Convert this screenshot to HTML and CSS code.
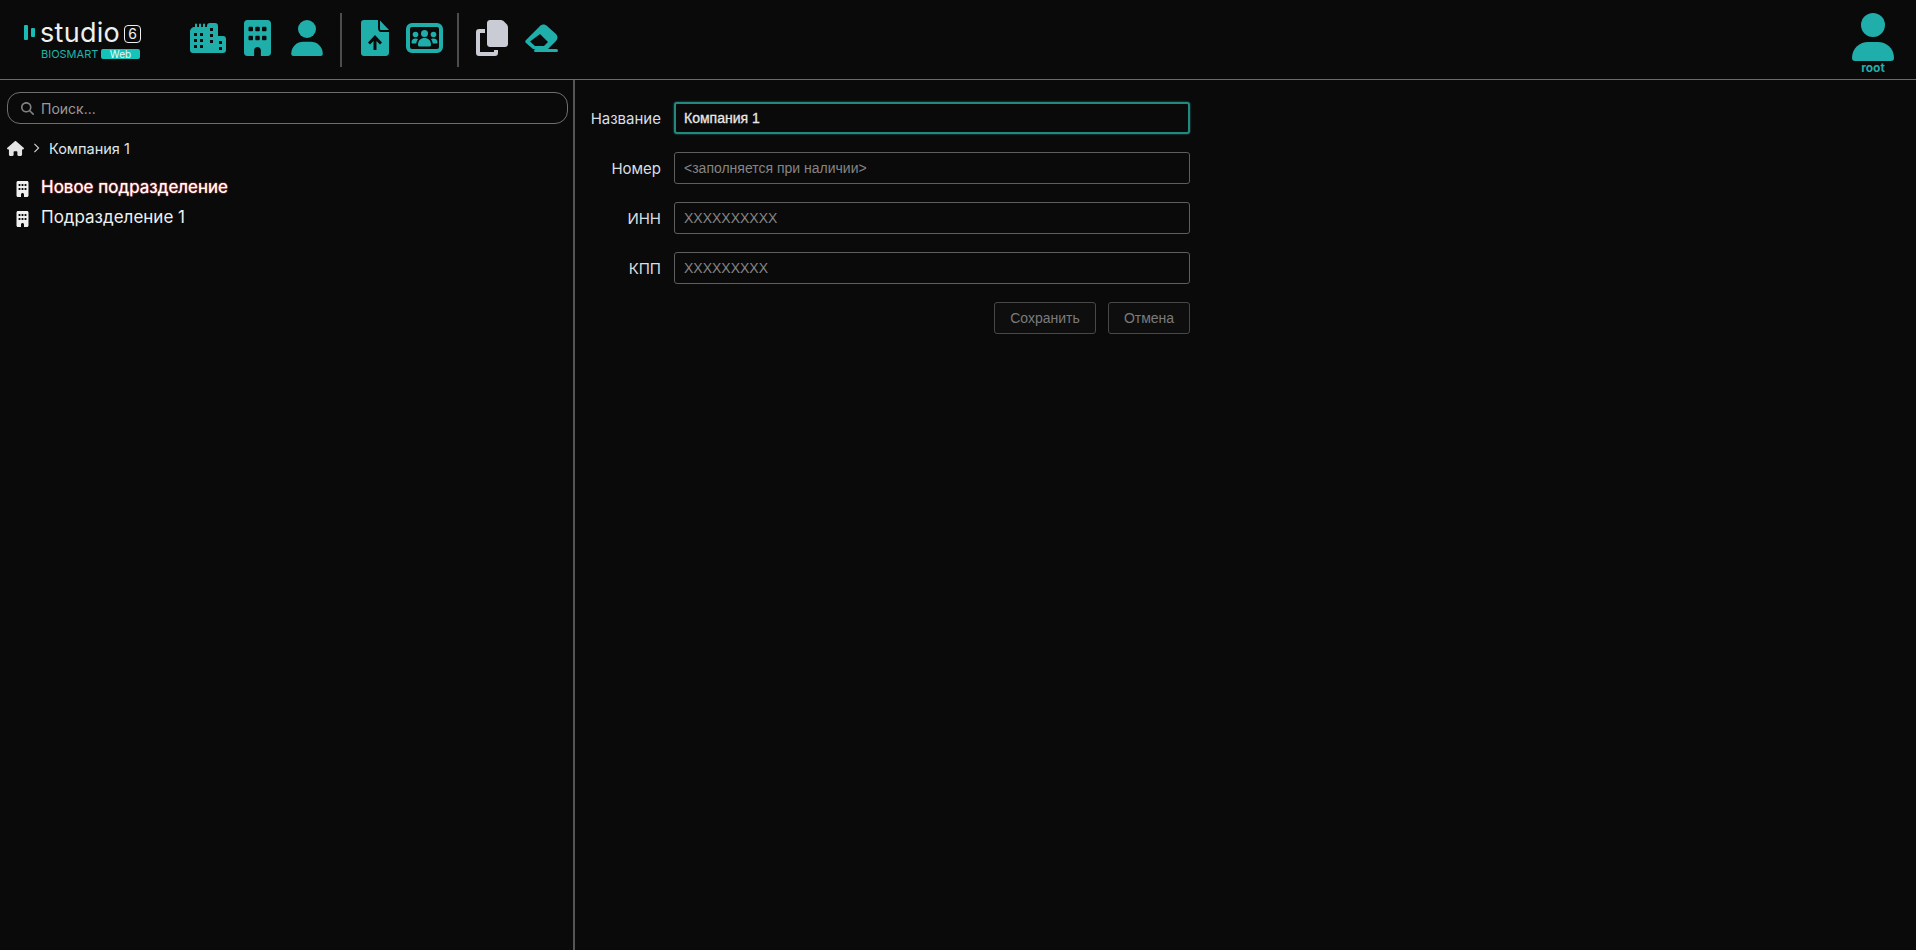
FILE: index.html
```html
<!DOCTYPE html>
<html lang="ru">
<head>
    <meta charset="UTF-8">
    <meta name="viewport" content="width=device-width, initial-scale=1.0">
    <title>Studio 6</title>
    <link rel="stylesheet" href="styles.css">
</head>
<body>
    <svg class="sprite" aria-hidden="true">
        <symbol id="building" viewBox="0 0 384 512">
            <path d="M48 0C21.5 0 0 21.5 0 48V464c0 26.5 21.5 48 48 48h96V432c0-26.5 21.5-48 48-48s48 21.5 48 48v80h96c26.5 0 48-21.5 48-48V48c0-26.5-21.5-48-48-48H48zM64 240c0-8.8 7.2-16 16-16h32c8.8 0 16 7.2 16 16v32c0 8.8-7.2 16-16 16H80c-8.8 0-16-7.2-16-16V240zm112-16h32c8.8 0 16 7.2 16 16v32c0 8.8-7.2 16-16 16H176c-8.8 0-16-7.2-16-16V240c0-8.8 7.2-16 16-16zm80 16c0-8.8 7.2-16 16-16h32c8.8 0 16 7.2 16 16v32c0 8.8-7.2 16-16 16H272c-8.8 0-16-7.2-16-16V240zM80 96h32c8.8 0 16 7.2 16 16v32c0 8.8-7.2 16-16 16H80c-8.8 0-16-7.2-16-16V112c0-8.8 7.2-16 16-16zm80 16c0-8.8 7.2-16 16-16h32c8.8 0 16 7.2 16 16v32c0 8.8-7.2 16-16 16H176c-8.8 0-16-7.2-16-16V112zM272 96h32c8.8 0 16 7.2 16 16v32c0 8.8-7.2 16-16 16H272c-8.8 0-16-7.2-16-16V112c0-8.8 7.2-16 16-16z"/>
        </symbol>
        <symbol id="user" viewBox="0 0 42 48">
            <circle cx="21" cy="12" r="12"/>
            <path d="M0 45C0 35 8 29 16 29H26C34 29 42 35 42 45C42 47 41 48 39 48H3C1 48 0 47 0 45Z"/>
        </symbol>
    </svg>

    <header class="topbar">
        <div class="logo">
            <div class="logo-top">
                <span class="logo-mark"><i></i><i></i></span>
                <span class="logo-name">studio</span>
                <span class="logo-six">6</span>
            </div>
            <div class="logo-bottom">
                <span class="logo-sub">BIOSMART</span>
                <span class="logo-web">Web</span>
            </div>
        </div>

        <div class="tools">
            <svg class="icon city" viewBox="0 0 36 30">
                <path fill-rule="evenodd" d="M5 4V1.500a1 1 0 0 1 2 0V4H9V1.500a1 1 0 0 1 2 0V4H13V1.500a1 1 0 0 1 2 0V4H17V3C17 1 18 0 20 0H25C27 0 28 1 28 3V13H33C35 13 36 14 36 16V27C36 29 35 30 33 30H3C1 30 0 29 0 27V9C0 6 2 4 5 4ZM4 10V13H7V10ZM10 10V13H13V10ZM4 16V19H7V16ZM10 16V19H13V16ZM4 22V25H7V22ZM10 22V25H13V22ZM20 5V8H23V5ZM20 11V14H23V11ZM20 17V20H23V17ZM29 18V21H32V18ZM29 24V27H32V24Z"/>
            </svg>
            <svg class="icon building"><use href="#building"/></svg>
            <svg class="icon person"><use href="#user"/></svg>
            <span class="divider"></span>
            <svg class="icon file" viewBox="0 0 28 36">
                <path d="M3 0H17V8C17 10 18 12 20 12H28V33C28 35 26 36 25 36H3C1 36 0 35 0 33V3C0 1 1 0 3 0Z"/>
                <path d="M19 0.500L28 10H20C19.500 10 19 9.500 19 9Z"/>
                <path class="cut" d="M14 15L21 22.500L19 24.500L15.500 21V30H12.500V21L9 24.500L7 22.500Z"/>
            </svg>
            <svg class="icon group" viewBox="0 0 37 30">
                <rect x="2" y="2" width="33" height="26" rx="4" class="ring"/>
                <circle cx="18.500" cy="10.500" r="3.500"/>
                <circle cx="9.500" cy="11.500" r="2.800"/>
                <circle cx="27.500" cy="11.500" r="2.800"/>
                <path d="M12 22C12 17 15 15 18.500 15S25 17 25 22C25 23 24 23.500 23.500 23.500H13.500C13 23.500 12 23 12 22Z"/>
                <path d="M5.500 19.500C5.500 17 7 15.500 9.500 15.500C10.500 15.500 11.500 15.700 12 16.300C11 17.500 10.500 19 10.300 20.500H6.500C6 20.500 5.500 20 5.500 19.500Z"/>
                <path d="M31.500 19.500C31.500 17 30 15.500 27.500 15.500C26.500 15.500 25.500 15.700 25 16.300C26 17.500 26.500 19 26.700 20.500H30.500C31 20.500 31.500 20 31.500 19.500Z"/>
            </svg>
            <span class="divider"></span>
            <svg class="icon copy" viewBox="0 0 32 36">
                <path d="M11 3C11 1 12.500 0 14 0H24C26 0 27 .5 28 1.500L30.500 4C31.500 5 32 6 32 8V24C32 26 30.500 27 29 27H14C12.500 27 11 26 11 24Z"/>
                <path d="M9 9H3C1 9 0 10 0 12V33C0 35 1 36 3 36H19C21 36 22 35 22 33V30H18V32H4V13H9Z"/>
            </svg>
            <svg class="icon eraser" viewBox="0 0 33 28">
                <path fill-rule="evenodd" d="M1 16L15 2C17 0 20 0 22 2L31 10C33 12 33 15 31 17L23 25H8L1 19C0 18 0 17 1 16ZM5 17.500L10 22H19L23 18L15 10Z"/>
                <rect x="9" y="25" width="24" height="3" rx="1.500"/>
            </svg>
        </div>

        <div class="account">
            <svg class="account-icon"><use href="#user"/></svg>
            <span class="account-name">root</span>
        </div>
    </header>

    <main class="workspace">
        <aside class="sidebar">
            <label class="search">
                <svg class="search-icon" viewBox="0 0 512 512"><path d="M416 208c0 45.900-14.900 88.300-40 122.700L502.600 457.400c12.500 12.500 12.500 32.800 0 45.300s-32.800 12.500-45.300 0L330.700 376c-34.400 25.200-76.800 40-122.700 40C93.100 416 0 322.900 0 208S93.100 0 208 0S416 93.100 416 208zM208 352a144 144 0 1 0 0-288 144 144 0 1 0 0 288z"/></svg>
                <input type="text" placeholder="Поиск...">
            </label>

            <nav class="crumbs">
                <svg class="home-icon" viewBox="0 0 576 512"><path d="M575.800 255.500c0 18-15 32.100-32 32.100h-32l.7 160.200c0 2.700-.2 5.400-.5 8.100V472c0 22.100-17.900 40-40 40H456c-1.100 0-2.200 0-3.300-.1c-1.400 .1-2.800 .1-4.200 .1H416 392c-22.100 0-40-17.900-40-40V448 384c0-17.700-14.300-32-32-32H256c-17.700 0-32 14.300-32 32v64 24c0 22.100-17.900 40-40 40H160 128.100c-1.500 0-3-.1-4.500-.2c-1.200 .1-2.400 .2-3.600 .2H104c-22.100 0-40-17.900-40-40V360c0-.9 0-1.900 .1-2.800V287.600H32c-18 0-32-14-32-32.100c0-9 3-17 10-24L266.400 8c7-7 15-8 22-8s15 2 21 7L564.800 231.500c8 7 12 15 11 24z"/></svg>
                <svg class="crumb-arrow" viewBox="0 0 8 12"><path d="M1.500 1L6.500 6L1.500 11"/></svg>
                <span>Компания 1</span>
            </nav>

            <ul class="tree">
                <li class="tree-item active">
                    <svg class="tree-icon"><use href="#building"/></svg>
                    <span>Новое подразделение</span>
                </li>
                <li class="tree-item">
                    <svg class="tree-icon"><use href="#building"/></svg>
                    <span>Подразделение 1</span>
                </li>
            </ul>
        </aside>

        <section class="content">
            <form class="company-form">
                <label class="field-label">Название</label>
                <input class="field focused" type="text" value="Компания 1">
                <label class="field-label">Номер</label>
                <input class="field" type="text" placeholder="<заполняется при наличии>">
                <label class="field-label">ИНН</label>
                <input class="field" type="text" placeholder="XXXXXXXXXX">
                <label class="field-label">КПП</label>
                <input class="field" type="text" placeholder="XXXXXXXXX">
                <div class="actions">
                    <button type="button" class="btn save" disabled>Сохранить</button>
                    <button type="button" class="btn cancel" disabled>Отмена</button>
                </div>
            </form>
        </section>
    </main>
</body>
</html>
```

FILE: styles.css
```css
* {
    box-sizing: border-box;
}
html, body {
    height: 100%;
}
body {
    margin: 0;
    display: flex;
    flex-direction: column;
    overflow: hidden;
    background-color: #0a0a0a;
    color: #e6e6e6;
    font-family: Inter, "Noto Sans", sans-serif;
}
.sprite {
    display: none;
}

/* top bar */
.topbar {
    display: flex;
    align-items: center;
    flex: none;
    height: 80px;
    padding: 0 22px 4px 24px;
    border-bottom: 1px solid #6b6b6b;
}
.logo {
    width: 117px;
    flex: none;
    margin-top: 4px;
}
.logo-top {
    display: flex;
    align-items: center;
    height: 26px;
}
.logo-mark {
    display: flex;
    align-items: center;
    gap: 3px;
    margin-right: 5px;
}
.logo-mark i {
    display: block;
    width: 4px;
    height: 15px;
    background-color: #17bdb4;
    border-radius: 1px;
}
.logo-mark i + i {
    height: 9px;
    width: 4px;
}
.logo-name {
    font-size: 27px;
    line-height: 26px;
    letter-spacing: .3px;
    color: #efefef;
}
.logo-six {
    width: 18px;
    height: 18px;
    margin: 2px 0 0 4px;
    border: 1px solid #efefef;
    border-radius: 4px;
    font-size: 14px;
    line-height: 16px;
    text-align: center;
    color: #efefef;
}
.logo-bottom {
    display: flex;
    align-items: center;
    margin-top: 3px;
    padding-left: 17px;
}
.logo-sub {
    width: 60px;
    font-size: 11px;
    line-height: 11px;
    color: #1fb5ad;
}
.logo-web {
    width: 39px;
    height: 10px;
    border-radius: 2px;
    background-color: #14c4ba;
    color: #e4fbf9;
    font-size: 10px;
    line-height: 10px;
    text-align: center;
}
.tools {
    display: flex;
    align-items: center;
    margin-left: 49px;
}
.icon {
    fill: #20aeaa;
    flex: none;
}
.city {
    width: 36px;
    height: 30px;
}
.building {
    width: 27px;
    height: 36px;
    margin-left: 18px;
}
.person {
    width: 34px;
    height: 36px;
    margin-left: 19px;
}
.divider {
    width: 2px;
    height: 54px;
    margin: 4px 19px 0 16px;
    background-color: #4d4d4d;
}
.file {
    width: 28px;
    height: 36px;
}
.file .cut {
    fill: #0a0a0a;
}
.group {
    width: 37px;
    height: 30px;
    margin-left: 17px;
}
.group .ring {
    fill: none;
    stroke: #20aeaa;
    stroke-width: 4;
}
.group + .divider {
    margin-left: 14px;
    margin-right: 17px;
}
.copy {
    width: 32px;
    height: 36px;
    fill: #c9ccd4;
}
.eraser {
    width: 33px;
    height: 28px;
    margin-left: 17px;
}
.account {
    display: flex;
    flex-direction: column;
    align-items: center;
    margin-left: auto;
    padding-top: 11px;
}
.account-icon {
    display: block;
    width: 42px;
    height: 48px;
    fill: #20aeaa;
}
.account-name {
    color: #20aeaa;
    font-size: 12px;
    font-weight: 700;
    line-height: 13px;
}

/* left tree */
.workspace {
    display: flex;
    flex: 1;
    min-height: 0;
}
.sidebar {
    flex: none;
    width: 575px;
    padding: 12px 7px 0;
    border-right: 2px solid #555;
}
.search {
    display: flex;
    align-items: center;
    height: 32px;
    width: 561px;
    padding-left: 13px;
    border: 1px solid #6f6f6f;
    border-radius: 13px;
}
.search-icon {
    width: 13px;
    height: 13px;
    margin-right: 7px;
    fill: #808080;
}
.search input {
    flex: 1;
    padding: 0;
    border: none;
    outline: none;
    background: none;
    color: #e6e6e6;
    font-family: inherit;
    font-size: 14px;
}
.search input::placeholder {
    color: #9a9a9a;
    opacity: 1;
}
.crumbs {
    display: flex;
    align-items: center;
    height: 20px;
    margin-top: 14px;
    font-size: 14.500px;
    color: #dfe6ea;
}
.home-icon {
    width: 17px;
    height: 15px;
    fill: #e4e4e4;
}
.crumb-arrow {
    width: 7px;
    height: 10px;
    margin: 0 9px 0 9px;
    fill: none;
    stroke: #d0d0d0;
    stroke-width: 1.400;
}
.tree {
    list-style: none;
    margin: 14px 0 0;
    padding: 0 0 0 8px;
}
.tree-item {
    display: flex;
    align-items: center;
    height: 30px;
    font-size: 17px;
    color: #eef1f3;
}
.tree-icon {
    width: 13px;
    height: 16px;
    margin: 3px 12px 0 1px;
    fill: #f0f0f0;
}
.tree-item.active {
    color: #fff;
    text-shadow: 0 0 1px #ff7a7a, 0 0 2px #b84c4c;
}

/* company form */
.content {
    flex: 1;
    padding: 22px 0 0 0;
}
.company-form {
    display: grid;
    grid-template-columns: 87px 516px;
    column-gap: 12px;
    row-gap: 18px;
    align-items: center;
}
.field-label {
    padding-right: 1px;
    text-align: right;
    font-size: 15px;
    color: #d8dfe3;
}
.field {
    height: 32px;
    padding: 0 9px;
    border: 1px solid #5e5e5e;
    border-radius: 3px;
    outline: none;
    background-color: #0a0a0a;
    color: #e8e8e8;
    font-family: "Liberation Sans", Arial, sans-serif;
    font-size: 14px;
}
.field::placeholder {
    color: #858585;
    opacity: 1;
}
.field.focused {
    border: 2px solid #23897f;
    padding-left: 8px;
    -webkit-text-stroke: .3px #e8e8e8;
    box-shadow: 0 0 2px #23897f;
}
.actions {
    grid-column: 2;
    display: flex;
    justify-content: flex-end;
    gap: 12px;
}
.btn {
    height: 32px;
    padding: 0;
    border: 1px solid #484848;
    border-radius: 3px;
    background-color: #0e0e0e;
    color: #7b7b7b;
    font-family: "Liberation Sans", Arial, sans-serif;
    font-size: 14px;
}
.save {
    width: 102px;
}
.cancel {
    width: 82px;
}
```
